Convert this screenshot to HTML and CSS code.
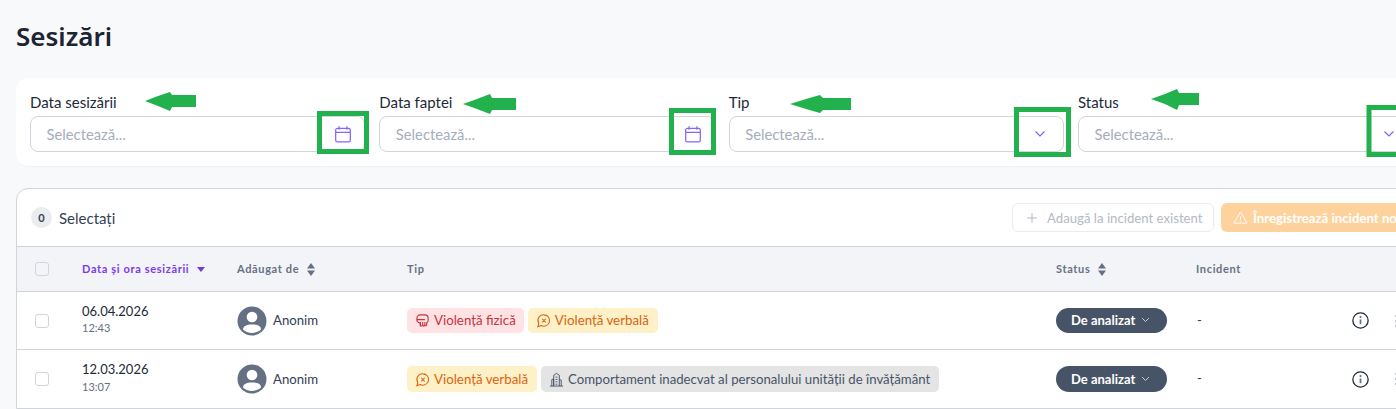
FILE: index.html
```html
<!DOCTYPE html>
<html lang="ro">
<head>
<meta charset="utf-8">
<title>Sesizări</title>
<link rel="stylesheet" href="styles.css">
</head>
<body>
<svg width="0" height="0" class="defs">
  <symbol id="i-cal" viewBox="0 0 16 16"><path d="M1.500 4.500a1.500 1.500 0 0 1 1.500-1.500h10a1.500 1.500 0 0 1 1.500 1.500v9a1.500 1.500 0 0 1-1.500 1.500h-10a1.500 1.500 0 0 1-1.500-1.500zM1.500 6.500h13M4.500 1.200v3M11.500 1.200v3" fill="none" stroke="currentColor" stroke-width="1.100"/></symbol>
  <symbol id="i-chev" viewBox="0 0 12 8"><path d="M1.500 1.500L6 6l4.500-4.500" fill="none" stroke="currentColor" stroke-width="1.100"/></symbol>
  <symbol id="i-sort" viewBox="0 0 8 13"><path d="M4 0l4 5.400H0zM4 13L0 7.600h8z" fill="currentColor"/></symbol>
  <symbol id="i-user" viewBox="0 0 30 30"><circle cx="15" cy="15" r="14.500" fill="#667085"/><circle cx="15" cy="11" r="5.300" fill="#fff"/><path d="M6 23.500c0-3 3-5 9-5s9 2 9 5c-2.200 2-5.400 3.500-9 3.500s-6.800-1.500-9-3.500z" fill="#fff"/></symbol>
  <symbol id="i-speech" viewBox="0 0 16 16"><path d="M8.500 2a6 6 0 1 1-2.800 11.300L2 14.500l1-3.300A6 6 0 0 1 8.500 2zM6.700 6.300l3.600 3.600M10.300 6.300L6.700 9.900" fill="none" stroke="currentColor" stroke-width="1.100"/></symbol>
  <symbol id="i-fist" viewBox="0 0 16 16"><path d="M2 7.500V5.500a3.500 3.500 0 0 1 3.500-3.500h5a3.500 3.500 0 0 1 3.500 3.500v2.500a2.500 2.500 0 0 1-1.500 2.300v2.200a1.200 1.200 0 0 1-2.300.4 1.200 1.200 0 0 1-2.300 0 1.200 1.200 0 0 1-2.400-.4v-2.200A2.800 2.800 0 0 1 2 7.500zM2.500 7h8M5.800 9.500v3.500M8.200 9.500v3.500M10.600 9.500v3" fill="none" stroke="currentColor" stroke-width="1.200"/></symbol>
  <symbol id="i-bld" viewBox="0 0 16 16"><path d="M1 15h14M3 15V8l2-.5V15M5 15V3.500l3-2 3 2V15M11 8l2 .5V15M7 5.500h2M7 8h2M7 10.500h2M7 13h2" fill="none" stroke="currentColor" stroke-width="1"/></symbol>
  <symbol id="i-info" viewBox="0 0 16 16"><circle cx="8" cy="8" r="7.200" fill="none" stroke="currentColor" stroke-width="1.200"/><path d="M8 7v4.500" stroke="#667085" stroke-width="1.600"/><circle cx="8" cy="4.800" r="1" fill="#667085"/></symbol>
  <symbol id="i-warn" viewBox="0 0 16 16"><path d="M8 2L15 14H1zM8 6.500v4M8 11.800v.8" fill="none" stroke="currentColor" stroke-width="1"/></symbol>
  <symbol id="i-plus" viewBox="0 0 12 12"><path d="M6 1v10M1 6h10" stroke="currentColor" stroke-width="1"/></symbol>
</svg>

<main class="page">
  <h1 class="title">Sesizări</h1>

  <section class="filters">
    <div class="field">
      <label class="label">Data sesizării</label>
      <div class="input"><span class="placeholder">Selectează...</span><svg class="ico-cal"><use href="#i-cal"/></svg></div>
    </div>
    <div class="field">
      <label class="label">Data faptei</label>
      <div class="input"><span class="placeholder">Selectează...</span><svg class="ico-cal"><use href="#i-cal"/></svg></div>
    </div>
    <div class="field">
      <label class="label">Tip</label>
      <div class="input"><span class="placeholder">Selectează...</span><svg class="ico-chev"><use href="#i-chev"/></svg></div>
    </div>
    <div class="field">
      <label class="label">Status</label>
      <div class="input"><span class="placeholder">Selectează...</span><svg class="ico-chev"><use href="#i-chev"/></svg></div>
    </div>
  </section>

  <section class="panel">
    <div class="toolbar">
      <span class="count">0</span>
      <span class="selected">Selectați</span>
      <div class="actions">
        <button class="btn btn-ghost"><svg class="ico-plus"><use href="#i-plus"/></svg>Adaugă la incident existent</button>
        <button class="btn btn-warn"><svg class="ico-warn"><use href="#i-warn"/></svg>Înregistrează incident nou</button>
      </div>
    </div>

    <div class="row head">
      <div class="c-check"><span class="check"></span></div>
      <div class="c-date active"><span class="head-text">Data și ora sesizării</span><span class="caret"></span></div>
      <div class="c-user"><span class="head-text">Adăugat de</span><svg class="ico-sort"><use href="#i-sort"/></svg></div>
      <div class="c-type"><span class="head-text">Tip</span></div>
      <div class="c-status"><span class="head-text">Status</span><svg class="ico-sort"><use href="#i-sort"/></svg></div>
      <div class="c-inc"><span class="head-text">Incident</span></div>
    </div>

    <div class="row body first">
      <div class="c-check"><span class="check"></span></div>
      <div class="c-date"><div class="date">06.04.2026</div><div class="time">12:43</div></div>
      <div class="c-user"><svg class="avatar"><use href="#i-user"/></svg><span class="name">Anonim</span></div>
      <div class="c-type">
        <span class="tag tag-red"><svg class="ico-tag"><use href="#i-fist"/></svg>Violență fizică</span>
        <span class="tag tag-amber"><svg class="ico-tag"><use href="#i-speech"/></svg>Violență verbală</span>
      </div>
      <div class="c-status"><span class="pill">De analizat<svg class="ico-pill"><use href="#i-chev"/></svg></span></div>
      <div class="c-inc dash">-</div>
      <div class="c-acts"><svg class="ico-info"><use href="#i-info"/></svg><span class="dots"><i></i><i></i><i></i></span></div>
    </div>

    <div class="row body">
      <div class="c-check"><span class="check"></span></div>
      <div class="c-date"><div class="date">12.03.2026</div><div class="time">13:07</div></div>
      <div class="c-user"><svg class="avatar"><use href="#i-user"/></svg><span class="name">Anonim</span></div>
      <div class="c-type">
        <span class="tag tag-amber"><svg class="ico-tag"><use href="#i-speech"/></svg>Violență verbală</span>
        <span class="tag tag-gray"><svg class="ico-tag"><use href="#i-bld"/></svg>Comportament inadecvat al personalului unității de învățământ</span>
      </div>
      <div class="c-status"><span class="pill">De analizat<svg class="ico-pill"><use href="#i-chev"/></svg></span></div>
      <div class="c-inc dash">-</div>
      <div class="c-acts"><svg class="ico-info"><use href="#i-info"/></svg><span class="dots"><i></i><i></i><i></i></span></div>
    </div>
  </section>
</main>

<svg class="marks" width="1396" height="409" viewBox="0 0 1396 409">
  <g fill="#22b14c">
    <path d="M145 101l13-5 12-4 2 3h24v12h-24l-2 4-12-5z"/>
    <path d="M463 104l14-5 13-5 2 4h24v12h-24l-2 4-13-5z"/>
    <path d="M790 104l16-5 14-4 3 3h28v12h-28l-3 3-14-4z"/>
    <path d="M1151 99l14-5 12-5 2 4h20v12h-20l-2 5-12-6z"/>
  </g>
  <g fill="none" stroke="#22b14c" stroke-width="5">
    <rect x="319.500" y="113.500" width="47" height="38"/>
    <rect x="671.500" y="110.500" width="42" height="42"/>
    <rect x="1016.500" y="109.500" width="52" height="45"/>
    <rect x="1369" y="107.500" width="40" height="47"/>
  </g>
</svg>
</body>
</html>
```
FILE: styles.css
```css
* { box-sizing: border-box; }
html, body { margin: 0; height: 100%; }
body {
  position: relative;
  width: 1396px;
  height: 409px;
  overflow: hidden;
  background: #f8f9fb;
  font-family: "Lato", "Noto Sans", sans-serif;
  color: #1d2939;
}
.defs { position: absolute; }
.page { width: 1440px; padding: 0 0 0 16px; }
.title {
  margin: 0;
  padding-top: 19px;
  height: 78px;
  font-family: "Noto Sans", sans-serif;
  font-size: 26px;
  line-height: 35px;
  font-weight: 600;
  color: #1d2433;
}
.filters {
  display: flex;
  gap: 14px;
  width: 1411px;
  height: 88px;
  padding: 14px 14px;
  background: #fff;
  border-radius: 12px;
  box-shadow: 0 1px 1px #f0f1f4;
}
.field { width: 335.330px; flex: none; }
.label { display: block; height: 24px; font-size: 15px; line-height: 20px; color: #1d2939; }
.input {
  display: flex;
  align-items: center;
  justify-content: space-between;
  height: 36px;
  padding: 0 12px 0 15.500px;
  border: 1px solid #d0d5dd;
  border-radius: 8px;
  background: #fff;
}
.placeholder { font-size: 14.800px; color: #a6adbd; }
.ico-cal { width: 18px; height: 18px; color: #8466fb; }
.ico-chev { width: 12px; height: 8px; color: #7c5cfc; margin-right: 5px; }

.panel {
  width: 1411px;
  margin-top: 22px;
  background: #fff;
  border: 1px solid #d0d5dd;
  border-radius: 12px 12px 0 0;
}
.toolbar { display: flex; align-items: center; height: 57px; padding: 0 14px; }
.count {
  width: 21px; height: 21px; border-radius: 50%;
  background: #eaecf0; color: #344054;
  font-size: 11px; font-weight: 700;
  display: flex; align-items: center; justify-content: center;
}
.selected { margin-left: 7px; font-size: 15px; color: #344054; }
.actions { margin-left: auto; display: flex; gap: 7px; margin-right: -2px; }
.btn {
  display: flex; align-items: center;
  height: 29px; border-radius: 6px;
  font-family: inherit; font-size: 13.200px;
  white-space: nowrap;
}
.btn-ghost { background: #fff; border: 1px solid #eaecf0; color: #b4b9c4; width: 202px; padding: 0 10px; }
.btn-warn { background: #fdd29d; border: 0; color: #fff; font-weight: 700; width: 193px; padding: 0 0 0 12px; font-size: 13.200px; }
.ico-plus { width: 12px; height: 12px; margin: 0 9px 0 3px; color: #b4b9c4; flex: none; }
.ico-warn { width: 15px; height: 15px; margin: 0 5px 0 0; color: #fff; flex: none; }

.row { display: flex; align-items: center; border-top: 1px solid #d0d5dd; }
.head {
  height: 45px;
  background: #f2f4f7;
  font-size: 11px; font-weight: 700; letter-spacing: .65px;
  color: #667085;
}
.head-text { display: block; padding-bottom: 2px; }
.body { height: 59px; }
.body.first { height: 58px; }
.c-check { width: 65px; padding-left: 18px; display: flex; }
.check { width: 14px; height: 14px; border: 1px solid #d0d5dd; border-radius: 3px; background: #fff; }
.head .check { background: #f2f4f7; }
.c-date { width: 155px; }
.head .c-date { display: flex; align-items: center; }
.body .c-date { padding-bottom: 4px; }
.c-date.active { color: #7c3aed; }
.caret {
  display: block; width: 0; height: 0; margin-left: 8px;
  border: 4px solid transparent; border-top: 5px solid #6d3be0; border-bottom: 0;
}
.date { font-size: 13px; color: #1d2939; line-height: 18px; }
.time { font-size: 11px; color: #667085; line-height: 14px; margin-top: 1.500px; }
.c-user { width: 170px; display: flex; align-items: center; }
.ico-sort { width: 8px; height: 13px; margin-left: 8px; color: #667085; flex: none; }
.avatar { width: 30px; height: 30px; margin-right: 6px; }
.name { font-size: 13.200px; color: #344054; padding-bottom: 2px; }
.body:not(.first) .name { padding-bottom: 0; }
.c-type { width: 649px; display: flex; gap: 4px; }
.tag {
  display: inline-flex; align-items: center;
  height: 25px; padding: 0 9px 2px 8px;
  border-radius: 5px;
  font-size: 13.300px;
}
.body:not(.first) .tag { height: 26px; padding-bottom: 1px; }
.ico-tag { width: 15px; height: 15px; margin: 2px 4px 0 0; flex: none; }
.tag-red { background: #ffe3e4; color: #c8323c; padding-right: 8px; }
.tag-amber { background: #fef0c7; color: #d9640f; }
.tag-gray { background: #e4e4e4; color: #475467; font-size: 13.200px; }
.c-status { width: 140px; display: flex; align-items: center; }
.pill {
  display: inline-flex; align-items: center;
  width: 111px; height: 25px; padding: 0 0 1px 15px;
  border-radius: 13px;
  background: #475467; color: #fff;
  font-size: 13px; font-weight: 700;
}
.body:not(.first) .pill { height: 26px; }
.ico-pill { width: 9px; height: 6px; margin-left: 6px; color: #e4e7ec; }
.c-inc { width: 156px; }
.dash { font-size: 13px; color: #344054; padding-left: 1px; padding-bottom: 2px; }
.c-acts { display: flex; align-items: center; gap: 26px; }
.ico-info { width: 17px; height: 17px; color: #1d2939; flex: none; }
.dots { display: flex; flex-direction: column; gap: 3px; }
.dots i { display: block; width: 3px; height: 2px; background: #c4c8d0; }

.marks { position: absolute; left: 0; top: 0; pointer-events: none; }
```
